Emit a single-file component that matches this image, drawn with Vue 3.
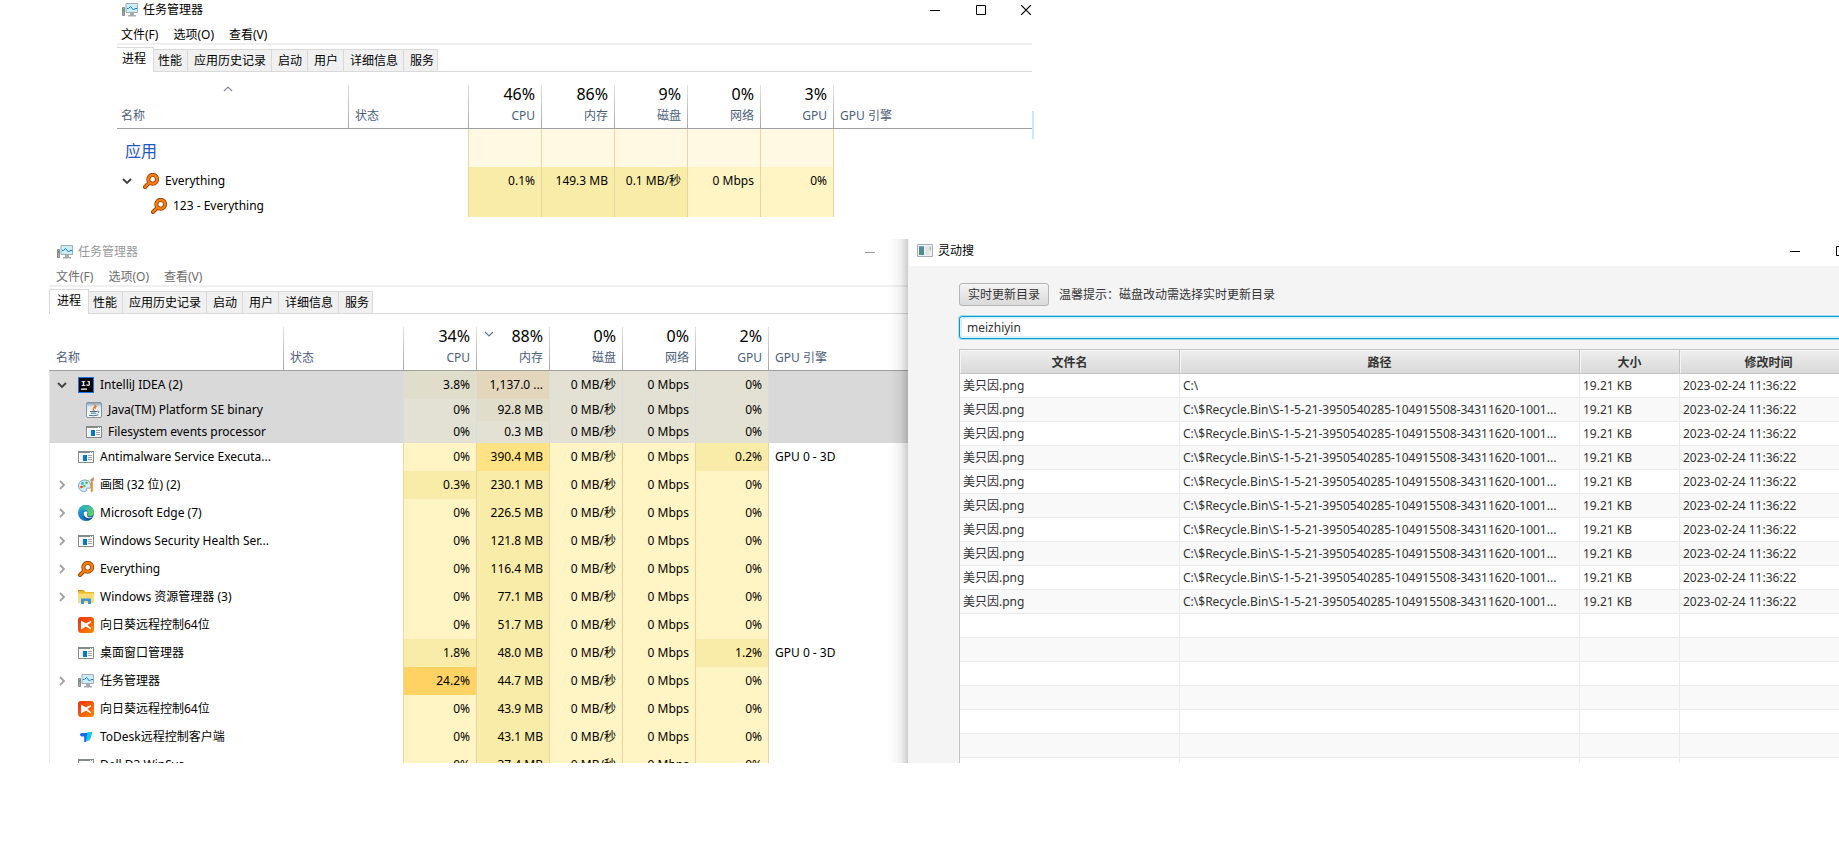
<script setup>
import { ref } from 'vue'

const menus = ['文件(F)', '选项(O)', '查看(V)']
const tabs = ['进程', '性能', '应用历史记录', '启动', '用户', '详细信息', '服务']
const meters = ['CPU', '内存', '磁盘', '网络', 'GPU']

const idle = '0 MB/秒'
const net = '0 Mbps'

// Each cell is [text, heat level]
function usage(cpu, mem, gpu = ['0%', 0]) {
  return [cpu, mem, [idle, 0], [net, 0], gpu]
}

const managers = [
  {
    id: 'front',
    sort: 'name',
    totals: ['46%', '86%', '9%', '0%', '3%'],
    rows: [
      { kind: 'group', name: '应用', cells: Array(5).fill(['', 'group']) },
      {
        kind: 'parent', name: 'Everything', icon: 'everything', arrow: 'open',
        cells: [['0.1%', 1], ['149.3 MB', 1], ['0.1 MB/秒', 1], [net, 0], ['0%', 0]]
      },
      {
        kind: 'child', name: '123 - Everything', icon: 'everything',
        cells: [['', 1], ['', 1], ['', 1], ['', 0], ['', 0]]
      }
    ]
  },
  {
    id: 'back',
    sort: 'memory',
    totals: ['34%', '88%', '0%', '0%', '2%'],
    rows: [
      { kind: 'parent', selected: true, name: 'IntelliJ IDEA (2)', icon: 'idea', arrow: 'open', cells: usage(['3.8%', 1], ['1,137.0 ...', 3]) },
      { kind: 'child', selected: true, name: 'Java(TM) Platform SE binary', icon: 'java', cells: usage(['0%', 0], ['92.8 MB', 1]) },
      { kind: 'child', selected: true, name: 'Filesystem events processor', icon: 'generic', cells: usage(['0%', 0], ['0.3 MB', 0]) },
      { kind: 'parent', name: 'Antimalware Service Executa...', icon: 'generic', cells: usage(['0%', 0], ['390.4 MB', 2], ['0.2%', 1]), engine: 'GPU 0 - 3D' },
      { kind: 'parent', name: '画图 (32 位) (2)', icon: 'paint', arrow: 'shut', cells: usage(['0.3%', 1], ['230.1 MB', 1]) },
      { kind: 'parent', name: 'Microsoft Edge (7)', icon: 'edge', arrow: 'shut', cells: usage(['0%', 0], ['226.5 MB', 1]) },
      { kind: 'parent', name: 'Windows Security Health Ser...', icon: 'generic', arrow: 'shut', cells: usage(['0%', 0], ['121.8 MB', 1]) },
      { kind: 'parent', name: 'Everything', icon: 'everything', arrow: 'shut', cells: usage(['0%', 0], ['116.4 MB', 1]) },
      { kind: 'parent', name: 'Windows 资源管理器 (3)', icon: 'explorer', arrow: 'shut', cells: usage(['0%', 0], ['77.1 MB', 1]) },
      { kind: 'parent', name: '向日葵远程控制64位', icon: 'sunflower', cells: usage(['0%', 0], ['51.7 MB', 1]) },
      { kind: 'parent', name: '桌面窗口管理器', icon: 'generic', cells: usage(['1.8%', 1], ['48.0 MB', 1], ['1.2%', 1]), engine: 'GPU 0 - 3D' },
      { kind: 'parent', name: '任务管理器', icon: 'taskman', arrow: 'shut', cells: usage(['24.2%', 3], ['44.7 MB', 1]) },
      { kind: 'parent', name: '向日葵远程控制64位', icon: 'sunflower', cells: usage(['0%', 0], ['43.9 MB', 1]) },
      { kind: 'parent', name: 'ToDesk远程控制客户端', icon: 'todesk', cells: usage(['0%', 0], ['43.1 MB', 1]) },
      { kind: 'clipped', name: 'Dell D3 WinSvc', icon: 'generic', cells: usage(['0%', 0], ['37.4 MB', 1]) }
    ]
  }
]

const query = ref('meizhiyin')
const recycled = 'C:\\$Recycle.Bin\\S-1-5-21-3950540285-104915508-34311620-1001...'
const files = Array.from({ length: 10 }, (_, i) => ({
  name: '美只因.png',
  path: i === 0 ? 'C:\\' : recycled,
  size: '19.21 KB',
  time: '2023-02-24 11:36:22'
}))
</script>

<template>
  <svg class="symbols" aria-hidden="true">
    <defs>
      <linearGradient id="edge-blue" x1="0" y1="0" x2="1" y2="1">
        <stop offset="0" stop-color="#2aa7e0" /><stop offset="1" stop-color="#0b55a5" />
      </linearGradient>
      <linearGradient id="edge-green" x1="0" y1="0" x2="1" y2="1">
        <stop offset="0" stop-color="#1f9fdc" /><stop offset="1" stop-color="#6fdc4c" />
      </linearGradient>
      <linearGradient id="sun-red" x1="0" y1="0" x2="1" y2="1">
        <stop offset="0" stop-color="#f02c10" /><stop offset="1" stop-color="#fb8a00" />
      </linearGradient>
      <linearGradient id="java-plate" x1="0" y1="0" x2="0" y2="1">
        <stop offset="0" stop-color="#7d9cb4" /><stop offset="0.3" stop-color="#e6ebef" /><stop offset="1" stop-color="#ffffff" />
      </linearGradient>
    </defs>
    <symbol id="taskman" viewBox="0 0 16 16">
      <path d="M0.500 5.500h2v8h-2z" fill="#a9aeb1" stroke="#85898c" />
      <path d="M1 7h1v2H1z" fill="#39b54a" />
      <path d="M4 1.500h11.500v9H4z" fill="#c9eefa" stroke="#a5aaad" />
      <path d="M5 6.500h1.500l2-2 3 3.500 1.500-1.500h2" fill="none" stroke="#1479c9" />
      <path d="M8 11h4v2h2v1.500H6V13h2z" fill="#a5aaad" />
    </symbol>
    <symbol id="everything" viewBox="0 0 16 16">
      <path d="M6.200 9.800L2 14" stroke="#8f3f0c" stroke-width="4" stroke-linecap="round" />
      <circle cx="9.700" cy="6.300" r="4.400" fill="#fff" stroke="#8f3f0c" stroke-width="4" />
      <path d="M6.500 9.500L2 14" stroke="#f77f0d" stroke-width="2.400" stroke-linecap="round" />
      <circle cx="9.700" cy="6.300" r="4.400" fill="none" stroke="#f77f0d" stroke-width="2.500" />
    </symbol>
    <symbol id="idea" viewBox="0 0 16 16">
      <path d="M0 0h16v16H0z" fill="#1475e8" />
      <path d="M1 1h14v14H1z" fill="#000" />
      <text x="3" y="9" fill="#fff" font-family="Liberation Mono, monospace" font-size="8" font-weight="bold">IJ</text>
      <path d="M3 11.500h6v1.300H3z" fill="#fff" />
    </symbol>
    <symbol id="java" viewBox="0 0 16 16">
      <rect x="0.500" y="0.500" width="15" height="15" rx="1.500" fill="url(#java-plate)" stroke="#7f94a6" />
      <path d="M8.500 2.500q1.500 1.500-.500 3t.500 3.500M10.500 4q-2 1.500-1 3" fill="none" stroke="#e8761c" stroke-width="1.200" />
      <path d="M4 9.500h7.500M4.800 11.200h5.500M3 13.300q5 1.200 9.500-.500M11.500 9q2.500 0 .500 2.200" fill="none" stroke="#44708f" />
    </symbol>
    <symbol id="generic" viewBox="0 0 16 16">
      <path d="M0.500 2.500h15v11H.500z" fill="#fff" stroke="#84898c" />
      <path d="M0 2h16v2H0z" fill="#84898c" />
      <path d="M12 3h1v1h-1zM14 3h1v1h-1z" fill="#fff" />
      <path d="M2 5h3v7H2z" fill="#f1f1f1" />
      <path d="M5 6h4v6H5z" fill="#0078d7" />
      <path d="M10 6.500h4M10 8.500h4M10 10.500h4" stroke="#a0a4a6" />
    </symbol>
    <symbol id="paint" viewBox="0 0 16 16">
      <path d="M7 3C2.500 3 .500 6 .500 9s2.500 5.500 6 5.500c2 0 2-1 1.800-2-.2-1.300 1-1.700 2.200-1.300 2 .5 2.500-1 2.300-2.800C12.500 5.200 10.500 3 7 3z" fill="#d3edf9" stroke="#6ea6c9" />
      <circle cx="4.500" cy="6.500" r="1.400" fill="#4aa9e0" /><circle cx="8.500" cy="5.700" r="1.300" fill="#4cb848" />
      <circle cx="3.500" cy="10" r="1.300" fill="#e8402c" /><circle cx="6.300" cy="9" r="1.200" fill="#58b947" />
      <path d="M12.800 5h2v9l-1 1.500-1-1.500z" fill="#f08a24" />
      <path d="M12.800 4.800C11.500 3 13 1.500 15.800.300c.4 2 .1 3.500-1 4.500z" fill="#c98d62" />
    </symbol>
    <symbol id="edge" viewBox="0 0 16 16">
      <circle cx="8" cy="8" r="8" fill="url(#edge-blue)" />
      <path d="M.300 6C1.200 2 4.300 0 8 0c4.700 0 8 3.300 8 7 0 2.800-2 4.200-4.200 4.200-1.600 0-2.600-.5-2.200-1.200.6-.8.900-1.300.7-2.200C10 5.800 8 4.400 5.600 4.400 3 4.400 1 5.200.300 6z" fill="url(#edge-green)" />
      <path d="M5.700 8.200c-.4 3.600 2.500 6 5.600 5.600 1.400-.1 2.400-.6 3.300-1.300-.8 0-5.700.8-5.700-2.500 0-.8.5-1.200.6-2-.1-1-.9-1.500-1.800-1.500-1 0-1.800.7-2 1.700z" fill="#fff" />
      <path d="M5.600 8.400c-.6 4 2.300 6.800 5.300 6.900 1.800-.7 3-1.700 3.700-2.800-3.500 1.800-8.500.2-9-4.100z" fill="#124f9c" />
    </symbol>
    <symbol id="explorer" viewBox="0 0 16 16">
      <path d="M0 1h6l1.500 2H16v11H0z" fill="#f0b92c" />
      <path d="M0 1h5v1H0z" fill="#c98d17" />
      <path d="M0 4.500h16V14H0z" fill="#fcdc78" />
      <path d="M3 15V9.500h10V15h-3v-3H6v3z" fill="#3a93dc" />
    </symbol>
    <symbol id="sunflower" viewBox="0 0 16 16">
      <rect width="16" height="16" rx="3" fill="url(#sun-red)" />
      <path d="M3 3.500L8 6.500l5-2.500v8L8 9.500l-5 3z" fill="#fff" />
      <path d="M13 4v8L8.500 8z" fill="#f9541a" />
      <path d="M8 6.500L13 4v1.500L9.500 8 13 11v1.500l-5-3z" fill="#fff" />
    </symbol>
    <symbol id="todesk" viewBox="0 0 16 16">
      <path d="M2 5.500Q2 4 4 4h6L8.200 13H6.200V7.500H4q-2 0-2-2z" fill="#1668f5" />
      <path d="M9.500 3h4.500q0 3.500-1.500 6.500T9 12q-1-4.500.500-9z" fill="#14c8e6" />
    </symbol>
    <symbol id="picture" viewBox="0 0 16 14">
      <path d="M.500.500h15v12H.500z" fill="#eef1f3" stroke="#a9aeb8" />
      <path d="M2 2.500h5v8.500H2z" fill="#4d8f86" /><path d="M2 2.500h5v3H2z" fill="#5b86a8" />
      <path d="M8.500 2.500h3.500v8.500H8.500z" fill="#dfe3e6" /><path d="M12.500 2.500h1.500v4h-1.500z" fill="#9fc7b0" />
    </symbol>
    <symbol id="arrow-open" viewBox="0 0 10 10"><path d="M1 3l4 4 4-4" fill="none" stroke="#404040" stroke-width="1.800" /></symbol>
    <symbol id="arrow-shut" viewBox="0 0 10 10"><path d="M3 1l4 4-4 4" fill="none" stroke="#a2a2a2" stroke-width="1.800" /></symbol>
    <symbol id="sort-up" viewBox="0 0 10 6"><path d="M1 5l4-4 4 4" fill="none" stroke="#7b8ca0" stroke-width="1.200" /></symbol>
    <symbol id="sort-down" viewBox="0 0 10 6"><path d="M1 1l4 4 4-4" fill="none" stroke="#60798f" stroke-width="1.200" /></symbol>
    <symbol id="win-min" viewBox="0 0 10 10"><path d="M0 5.500h10" stroke="currentColor" /></symbol>
    <symbol id="win-max" viewBox="0 0 10 10"><path d="M.500.500h9v9h-9z" fill="none" stroke="currentColor" /></symbol>
    <symbol id="win-close" viewBox="0 0 10 10"><path d="M0 0l10 10M10 0L0 10" stroke="currentColor" stroke-width="1.200" /></symbol>
  </svg>

  <main class="page">
    <section v-for="m in managers" :key="m.id" class="manager" :class="m.id">
      <header class="title-bar">
        <svg class="icon"><use href="#taskman" /></svg>
        <span class="title">任务管理器</span>
        <button class="control" aria-label="最小化"><svg><use href="#win-min" /></svg></button>
        <template v-if="m.id === 'front'">
          <button class="control" aria-label="最大化"><svg><use href="#win-max" /></svg></button>
          <button class="control" aria-label="关闭"><svg><use href="#win-close" /></svg></button>
        </template>
      </header>
      <nav class="menu">
        <button v-for="item in menus" :key="item">{{ item }}</button>
      </nav>
      <div class="tabs" role="tablist">
        <button v-for="(tab, i) in tabs" :key="tab" role="tab" :aria-selected="i === 0" :class="{ active: i === 0 }">{{ tab }}</button>
      </div>
      <table class="processes">
        <colgroup>
          <col class="col-name"><col class="col-status">
          <col v-for="meter in meters" :key="meter" class="col-meter">
          <col>
        </colgroup>
        <thead>
          <tr>
            <th class="left first">
              <svg v-if="m.sort === 'name'" class="sort"><use href="#sort-up" /></svg>
              <span>名称</span>
            </th>
            <th class="left"><span>状态</span></th>
            <th v-for="(meter, i) in meters" :key="meter">
              <svg v-if="m.sort === 'memory' && i === 1" class="sort"><use href="#sort-down" /></svg>
              <strong>{{ m.totals[i] }}</strong>
              <span>{{ meter }}</span>
            </th>
            <th class="left"><span>GPU 引擎</span></th>
          </tr>
        </thead>
        <tbody>
          <tr v-for="(row, r) in m.rows" :key="r" :class="[row.kind, { selected: row.selected }]">
            <td>
              <div class="cell name">
                <span v-if="row.kind !== 'group'" class="arrow">
                  <svg v-if="row.arrow"><use :href="'#arrow-' + row.arrow" /></svg>
                </span>
                <svg v-if="row.icon" class="icon"><use :href="'#' + row.icon" /></svg>
                <span class="label">{{ row.name }}</span>
              </div>
            </td>
            <td></td>
            <td v-for="(cell, c) in row.cells" :key="c" class="meter" :class="'heat-' + cell[1]">
              <div class="cell">{{ cell[0] }}</div>
            </td>
            <td class="engine"><div class="cell">{{ row.engine }}</div></td>
          </tr>
        </tbody>
      </table>
    </section>

    <div class="search-frame">
      <section class="search">
        <header class="title-bar">
          <svg class="picture"><use href="#picture" /></svg>
          <span class="title">灵动搜</span>
          <button class="control" aria-label="最小化"><svg><use href="#win-min" /></svg></button>
          <button class="control" aria-label="最大化"><svg><use href="#win-max" /></svg></button>
          <button class="control" aria-label="关闭"><svg><use href="#win-close" /></svg></button>
        </header>
        <div class="panel">
          <div class="toolbar">
            <button class="refresh">实时更新目录</button>
            <label for="query">温馨提示：磁盘改动需选择实时更新目录</label>
          </div>
          <input id="query" v-model="query" type="text">
          <table class="files">
            <colgroup><col class="file-name"><col class="file-path"><col class="file-size"><col></colgroup>
            <thead>
              <tr><th>文件名</th><th>路径</th><th>大小</th><th>修改时间</th></tr>
            </thead>
            <tbody>
              <tr v-for="(file, i) in files" :key="i">
                <td>{{ file.name }}</td><td>{{ file.path }}</td><td>{{ file.size }}</td><td>{{ file.time }}</td>
              </tr>
              <tr v-for="n in 6" :key="'blank' + n"><td></td><td></td><td></td><td></td></tr>
              <tr class="last"><td></td><td></td><td></td><td></td></tr>
            </tbody>
          </table>
        </div>
      </section>
    </div>
  </main>
</template>

<style>
body {
  background: #fff;
  overflow-x: hidden;
}
</style>

<style scoped>
.symbols {
  position: absolute;
  width: 0;
  height: 0;
}
.page {
  display: grid;
  grid-template-columns: 859fr 931fr;
  row-gap: 22px;
  padding-left: 49px;
  font: 12px/16px "Noto Sans", "Noto Sans CJK SC", sans-serif;
  color: #000;
}
button {
  font: inherit;
  color: inherit;
  background: none;
  border: 0;
  padding: 0;
}
svg {
  display: block;
}
.icon {
  flex: none;
  width: 16px;
  height: 16px;
}

/* Window chrome */
.title-bar {
  display: flex;
  align-items: center;
}
.title {
  flex: 1;
  padding-left: 5px;
}
.control {
  display: flex;
  flex: none;
  justify-content: center;
  width: 46px;
}
.control svg {
  width: 10px;
  height: 10px;
}

/* Task manager */
.manager {
  position: relative;
  min-width: 0;
}
.front {
  grid-column: 1 / -1;
  width: 915px;
  max-width: 100%;
  margin-left: 68px;
}
.front::after {
  content: "";
  position: absolute;
  left: 100%;
  top: 111px;
  width: 2px;
  height: 28px;
  background: #cce8ff;
}
.back {
  padding-top: 3px;
}
.manager .title-bar {
  height: 19px;
  padding-left: 5px;
}
.front .control:last-child {
  justify-content: flex-end;
  width: 28px;
  padding-right: 1px;
}
.back .title-bar {
  padding: 0 15px 0 8px;
  color: #999;
}
.menu {
  display: flex;
  gap: 15px;
  height: 17px;
  padding: 7px 0 0 4px;
  border-bottom: 2px solid #f0f0f0;
}
.back .menu {
  padding-left: 7px;
  color: #6d6d6d;
}
.tabs {
  display: flex;
  align-items: flex-end;
  height: 26px;
  border-bottom: 1px solid #d9d9d9;
}
.tabs button {
  box-sizing: border-box;
  height: 22px;
  padding: 0 5px 0 6px;
  background: #f0f0f0;
  border: solid #d9d9d9;
  border-width: 1px 1px 0 0;
}
.tabs button:last-child {
  padding-right: 3px;
}
.tabs .active {
  z-index: 1;
  height: 25px;
  margin: 0 -2px -1px 0;
  padding: 0 7px 2px 5px;
  background: #fff;
}
.back .tabs .active {
  padding-left: 7px;
  border-left-width: 1px;
}

.processes {
  width: 100%;
  table-layout: fixed;
  border-spacing: 0;
}
.col-name { width: 231px; }
.back .col-name { width: 234px; }
.col-status { width: 120px; }
.col-meter { width: 73px; }

.processes th {
  position: relative;
  height: 56px;
  padding: 0 6px 0 0;
  border-bottom: 1px solid #a0a0a0;
  background: linear-gradient(#fff 13px, #e2e2e2 13px, #a8a8a8) 0 0 / 1px 100% no-repeat;
  text-align: right;
  vertical-align: bottom;
  font-weight: normal;
}
.processes th.left {
  padding-left: 7px;
  text-align: left;
}
.processes th.first {
  padding-left: 4px;
  background: none;
}
.back th.first {
  padding-left: 7px;
}
.processes th strong {
  display: block;
  margin-bottom: 4px;
  font-size: 16px;
  line-height: 20px;
  font-weight: normal;
}
.processes th span {
  display: block;
  padding-bottom: 4px;
  color: #4c607a;
}
.sort {
  position: absolute;
  left: 8px;
  top: 17px;
  width: 10px;
  height: 6px;
}
.first .sort {
  left: 106px;
  top: 14px;
}

.processes td {
  padding: 0;
}
.back td:first-child {
  border-left: 1px solid #ebebeb;
}
.cell {
  height: 28px;
  line-height: 28px;
  overflow: hidden;
  white-space: nowrap;
}
.child .cell {
  height: 22px;
  line-height: 22px;
}
.clipped .cell {
  height: 12px;
}
.group .cell {
  height: 38px;
  line-height: 44px;
}
.name {
  display: flex;
  align-items: center;
  padding-left: 5px;
}
.group .name {
  align-items: flex-start;
}
.back .name {
  padding-left: 7px;
}
.clipped .name {
  align-items: flex-start;
}
.clipped .icon {
  margin-top: 6px;
}
.arrow {
  flex: none;
  width: 21px;
}
.child .arrow {
  width: 29px;
}
.arrow svg {
  width: 10px;
  height: 10px;
}
.label {
  padding-left: 6px;
}
.group .label {
  padding-left: 3px;
  font-size: 16px;
  color: #1e56c5;
}
.meter {
  text-align: right;
}
.meter .cell {
  padding-right: 6px;
}
.meter,
.engine {
  border-left: 1px solid #e8d5a0;
}
.engine .cell {
  padding-left: 6px;
}
.heat-group { background: #fff8e2; }
.heat-0 { background: #fff4c4; }
.heat-1 { background: #f9eca8; }
.heat-2 { background: #ffe283; }
.heat-3 { background: #ffd264; }
.selected td { background: #d9d9d9; }
.selected .meter,
.selected .engine { border-color: #d9dddd; }
.selected .heat-0 { background: #e2e1d4; }
.selected .heat-1 { background: #e0ddcb; }
.selected .heat-3 { background: #e3d6bb; }

/* Search tool */
.search-frame {
  position: relative;
  min-width: 0;
  overflow: hidden;
  margin-left: -18px;
  padding-left: 18px;
}
.search-frame::before {
  content: "";
  position: absolute;
  left: 0;
  top: 0;
  bottom: 0;
  width: 18px;
  background: linear-gradient(to right, rgba(0, 0, 0, 0), rgba(0, 0, 0, 0.06) 60%, rgba(0, 0, 0, 0.2));
}
.search {
  display: flex;
  flex-direction: column;
  height: 100%;
  margin-right: -70px;
  background: #f4f4f4;
}
.search .title-bar {
  height: 27px;
  margin: 0 -1px 0 1px;
  padding-left: 8px;
  background: #fff;
}
.search .title-bar > * {
  margin-bottom: 4px;
}
.picture {
  width: 16px;
  height: 14px;
}
.panel {
  display: flex;
  flex-direction: column;
  gap: 10px;
  padding: 17px 50px 0 51px;
  color: #333;
}
.toolbar {
  display: flex;
  align-items: center;
  gap: 10px;
}
.refresh {
  height: 23px;
  padding: 0 8px;
  border: 1px solid #b5b5b5;
  border-radius: 3px;
  background: linear-gradient(#f4f4f4, #dadada);
  line-height: 20px;
}
.panel input {
  box-sizing: border-box;
  height: 23px;
  padding: 0 7px;
  border: 1px solid #039ed3;
  border-radius: 3px;
  outline: 0;
  background: #fff;
  box-shadow: inset 0 0 0 2px #ddf1f8, 0 0 0 1px #a8dcee;
  font: inherit;
  color: inherit;
}
.files {
  width: 100%;
  table-layout: fixed;
  border-spacing: 0;
  border: solid #c3c3c3;
  border-width: 1px 1px 0;
}
.file-name { width: 220px; }
.file-path { width: 400px; }
.file-size { width: 100px; }
.files th {
  height: 21px;
  padding: 2px 0 0;
  border: solid #c3c3c3;
  border-width: 0 1px 1px 0;
  background: linear-gradient(#efefef, #d9d9d9);
  box-shadow: inset 1px 1px 0 #f6f6f6;
}
.files td {
  height: 23px;
  padding: 0 0 0 3px;
  border: solid #ebebeb;
  border-width: 0 1px 1px 0;
  background: #fff;
  white-space: nowrap;
}
.files tr:nth-child(even) td {
  background: #f9f9f9;
}
.files .last td {
  height: 5px;
  border-bottom: 0;
}
</style>
